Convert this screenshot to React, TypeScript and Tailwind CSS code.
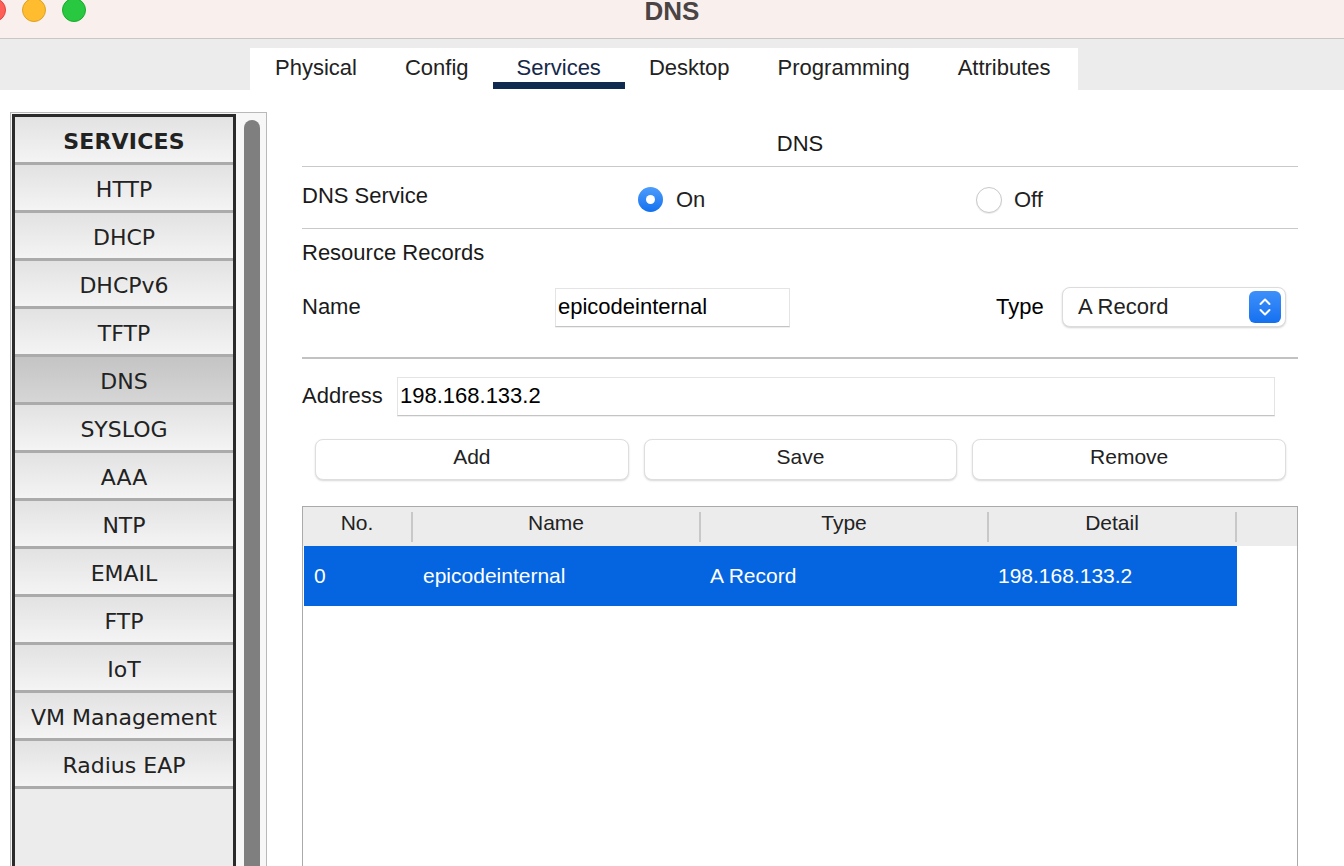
import React from 'react';

const tabs = ['Physical', 'Config', 'Services', 'Desktop', 'Programming', 'Attributes'];

const services = [
  'HTTP',
  'DHCP',
  'DHCPv6',
  'TFTP',
  'DNS',
  'SYSLOG',
  'AAA',
  'NTP',
  'EMAIL',
  'FTP',
  'IoT',
  'VM Management',
  'Radius EAP',
];

const columns = [
  { label: 'No.', width: 'w-[110px]' },
  { label: 'Name', width: 'w-[288px]' },
  { label: 'Type', width: 'w-[288px]' },
  { label: 'Detail', width: 'w-[248px]' },
];

const TitleBar = () => (
  <div className="relative h-[39px] bg-[#f9f0ee] border-b border-[#cac6c5] flex justify-center">
    <div className="absolute left-[-18px] top-[-2px] flex gap-[16px]">
      <div className="w-[24px] h-[24px] rounded-full bg-[#fe5f57] border border-[#e0443e]" />
      <div className="w-[24px] h-[24px] rounded-full bg-[#febc2e] border border-[#dea123]" />
      <div className="w-[24px] h-[24px] rounded-full bg-[#28c840] border border-[#1aab29]" />
    </div>
    <span className="text-[26px] leading-[22px] font-bold text-[#4a4444]">DNS</span>
  </div>
);

const TabBar = () => (
  <div className="h-[51px] bg-[#ececec] pl-[250px] flex items-end">
    <div className="h-[42px] w-[828px] bg-white flex pl-px">
      {tabs.map((tab) => {
        const active = tab === 'Services';
        return (
          <div key={tab} className="px-[24px] h-full flex flex-col">
            <span
              className={`pt-[6px] leading-[28px] text-[22px] ${active ? 'text-[#14284a]' : 'text-[#222]'}`}
            >
              {tab}
            </span>
            {active && <div className="mt-auto mb-[1px] -mx-[24px] h-[7px] bg-[#0f2a4e]" />}
          </div>
        );
      })}
    </div>
  </div>
);

const Sidebar = () => (
  <div className="w-[257px] h-[770px] border border-[#b9b9b9] bg-[#f7f7f7] flex pt-px pl-px">
    <div className="w-[224px] h-full border-[3px] border-[#2b2b2b] bg-[#ececec] flex flex-col font-['DejaVu_Sans',sans-serif] text-[22px] text-[#222]">
      <div className="h-[48px] shrink-0 border-b-[3px] border-[#ababab] bg-linear-to-b from-[#e2e2e2] to-[#f4f4f4] flex items-center justify-center pt-[4px] font-bold tracking-[0.2px]">
        SERVICES
      </div>
      {services.map((s) => (
        <div
          key={s}
          className={`h-[48px] shrink-0 border-b-[3px] border-[#ababab] flex items-center justify-center pt-[4px] bg-linear-to-b ${
            s === 'DNS' ? 'from-[#c4c4c4] to-[#d6d6d6]' : 'from-[#e2e2e2] to-[#f4f4f4]'
          }`}
        >
          {s}
        </div>
      ))}
    </div>
    <div className="flex-1 pl-[8px] pr-[6px] pt-[6px]">
      <div className="w-[16px] h-full bg-[#7f7f7f] rounded-t-full" />
    </div>
  </div>
);

const RadioOn = () => (
  <div className="w-[25px] h-[25px] rounded-full bg-linear-to-b from-[#4b9cfb] to-[#1170ef] flex items-center justify-center">
    <div className="w-[9px] h-[9px] rounded-full bg-white" />
  </div>
);

const RadioOff = () => (
  <div className="w-[26px] h-[26px] rounded-full bg-white border border-[#c9c9c9] shadow-[0_1px_1px_rgba(0,0,0,0.08)]" />
);

const Stepper = () => (
  <div className="w-[32px] h-[32px] rounded-[6px] bg-linear-to-b from-[#3d90fa] to-[#1470f0] flex items-center justify-center">
    <svg width="14" height="22" viewBox="0 0 14 22" fill="none">
      <path d="M2.5 8 L7 3.5 L11.5 8" stroke="white" strokeWidth="2" strokeLinecap="round" strokeLinejoin="round" />
      <path d="M2.5 14 L7 18.5 L11.5 14" stroke="white" strokeWidth="2" strokeLinecap="round" strokeLinejoin="round" />
    </svg>
  </div>
);

const Panel = () => (
  <div className="w-[996px] ml-[35px] text-[22px] text-[#1a1a1a]">
    <div className="h-[55px] pt-[8px] border-b border-[#c9c9c9] flex items-center justify-center">DNS</div>

    <div className="h-[62px] border-b border-[#c9c9c9] flex items-center">
      <span className="w-[336px] pb-[5px]">DNS Service</span>
      <div className="w-[338px] flex items-center gap-[13px] pt-[4px]">
        <RadioOn />
        <span className="text-[#222]">On</span>
      </div>
      <div className="flex items-center gap-[12px] pt-[4px]">
        <RadioOff />
        <span className="text-[#222]">Off</span>
      </div>
    </div>

    <div className="mt-[11px] h-[26px] leading-[26px]">Resource Records</div>

    <div className="mt-[21px] h-[40px] flex items-center">
      <span className="w-[253px] pb-[2px]">Name</span>
      <div className="w-[235px] h-[39px] border border-[#e4e4e4] border-b-[#c4c4c4] shadow-[0_1px_0_rgba(0,0,0,0.06)] flex items-center pl-[2px] pb-[2px] text-black">
        epicodeinternal
      </div>
      <span className="ml-[206px] w-[66px] pb-[2px] text-black">Type</span>
      <div className="w-[224px] h-[40px] rounded-[8px] bg-white border border-[#dcdcdc] shadow-[0_1px_2px_rgba(0,0,0,0.18)] flex items-center pl-[15px] pr-[4px]">
        <span className="flex-1 pb-[2px] text-[#222]">A Record</span>
        <Stepper />
      </div>
    </div>

    <div className="mt-[30px] h-[2px] bg-[#c2c2c2]" />

    <div className="mt-[18px] h-[39px] flex items-center">
      <span className="w-[95px] pb-[2px]">Address</span>
      <div className="w-[878px] h-[39px] border border-[#e4e4e4] border-b-[#c4c4c4] shadow-[0_1px_0_rgba(0,0,0,0.06)] flex items-center pl-[2px] pb-[2px] text-black">
        198.168.133.2
      </div>
    </div>

    <div className="mt-[23px] pl-[13px] pr-[12px] grid grid-cols-3 gap-[15px]">
      {['Add', 'Save', 'Remove'].map((b) => (
        <button
          key={b}
          className="h-[41px] rounded-[8px] bg-white border border-[#dedede] shadow-[0_1px_2px_rgba(0,0,0,0.16)] pb-[5px] text-[21px] text-[#222]"
        >
          {b}
        </button>
      ))}
    </div>

    <div className="mt-[26px] h-[400px] border border-b-0 border-[#aaaaaa]">
      <div className="h-[39px] bg-[#ececec] flex text-[21px] text-[#222]">
        {columns.map((c) => (
          <div key={c.label} className={`${c.width} flex items-center`}>
            <span className="flex-1 text-center pb-[7px]">{c.label}</span>
            <div className="w-[2px] h-[30px] bg-[#c8c8c8]" />
          </div>
        ))}
      </div>
      <div className="ml-px w-[933px] h-[60px] bg-[#0565e0] flex items-center text-white text-[21px]">
        <span className="w-[109px] pl-[10px]">0</span>
        <span className="w-[288px] pl-[10px]">epicodeinternal</span>
        <span className="w-[288px] pl-[9px]">A Record</span>
        <span className="w-[248px] pl-[9px]">198.168.133.2</span>
      </div>
    </div>
  </div>
);

export default function App() {
  return (
    <div className="w-[1344px] h-[866px] overflow-hidden bg-white font-['Liberation_Sans',Arial,sans-serif]">
      <TitleBar />
      <TabBar />
      <div className="flex items-start pt-[22px] pl-[10px]">
        <Sidebar />
        <Panel />
      </div>
    </div>
  );
}
